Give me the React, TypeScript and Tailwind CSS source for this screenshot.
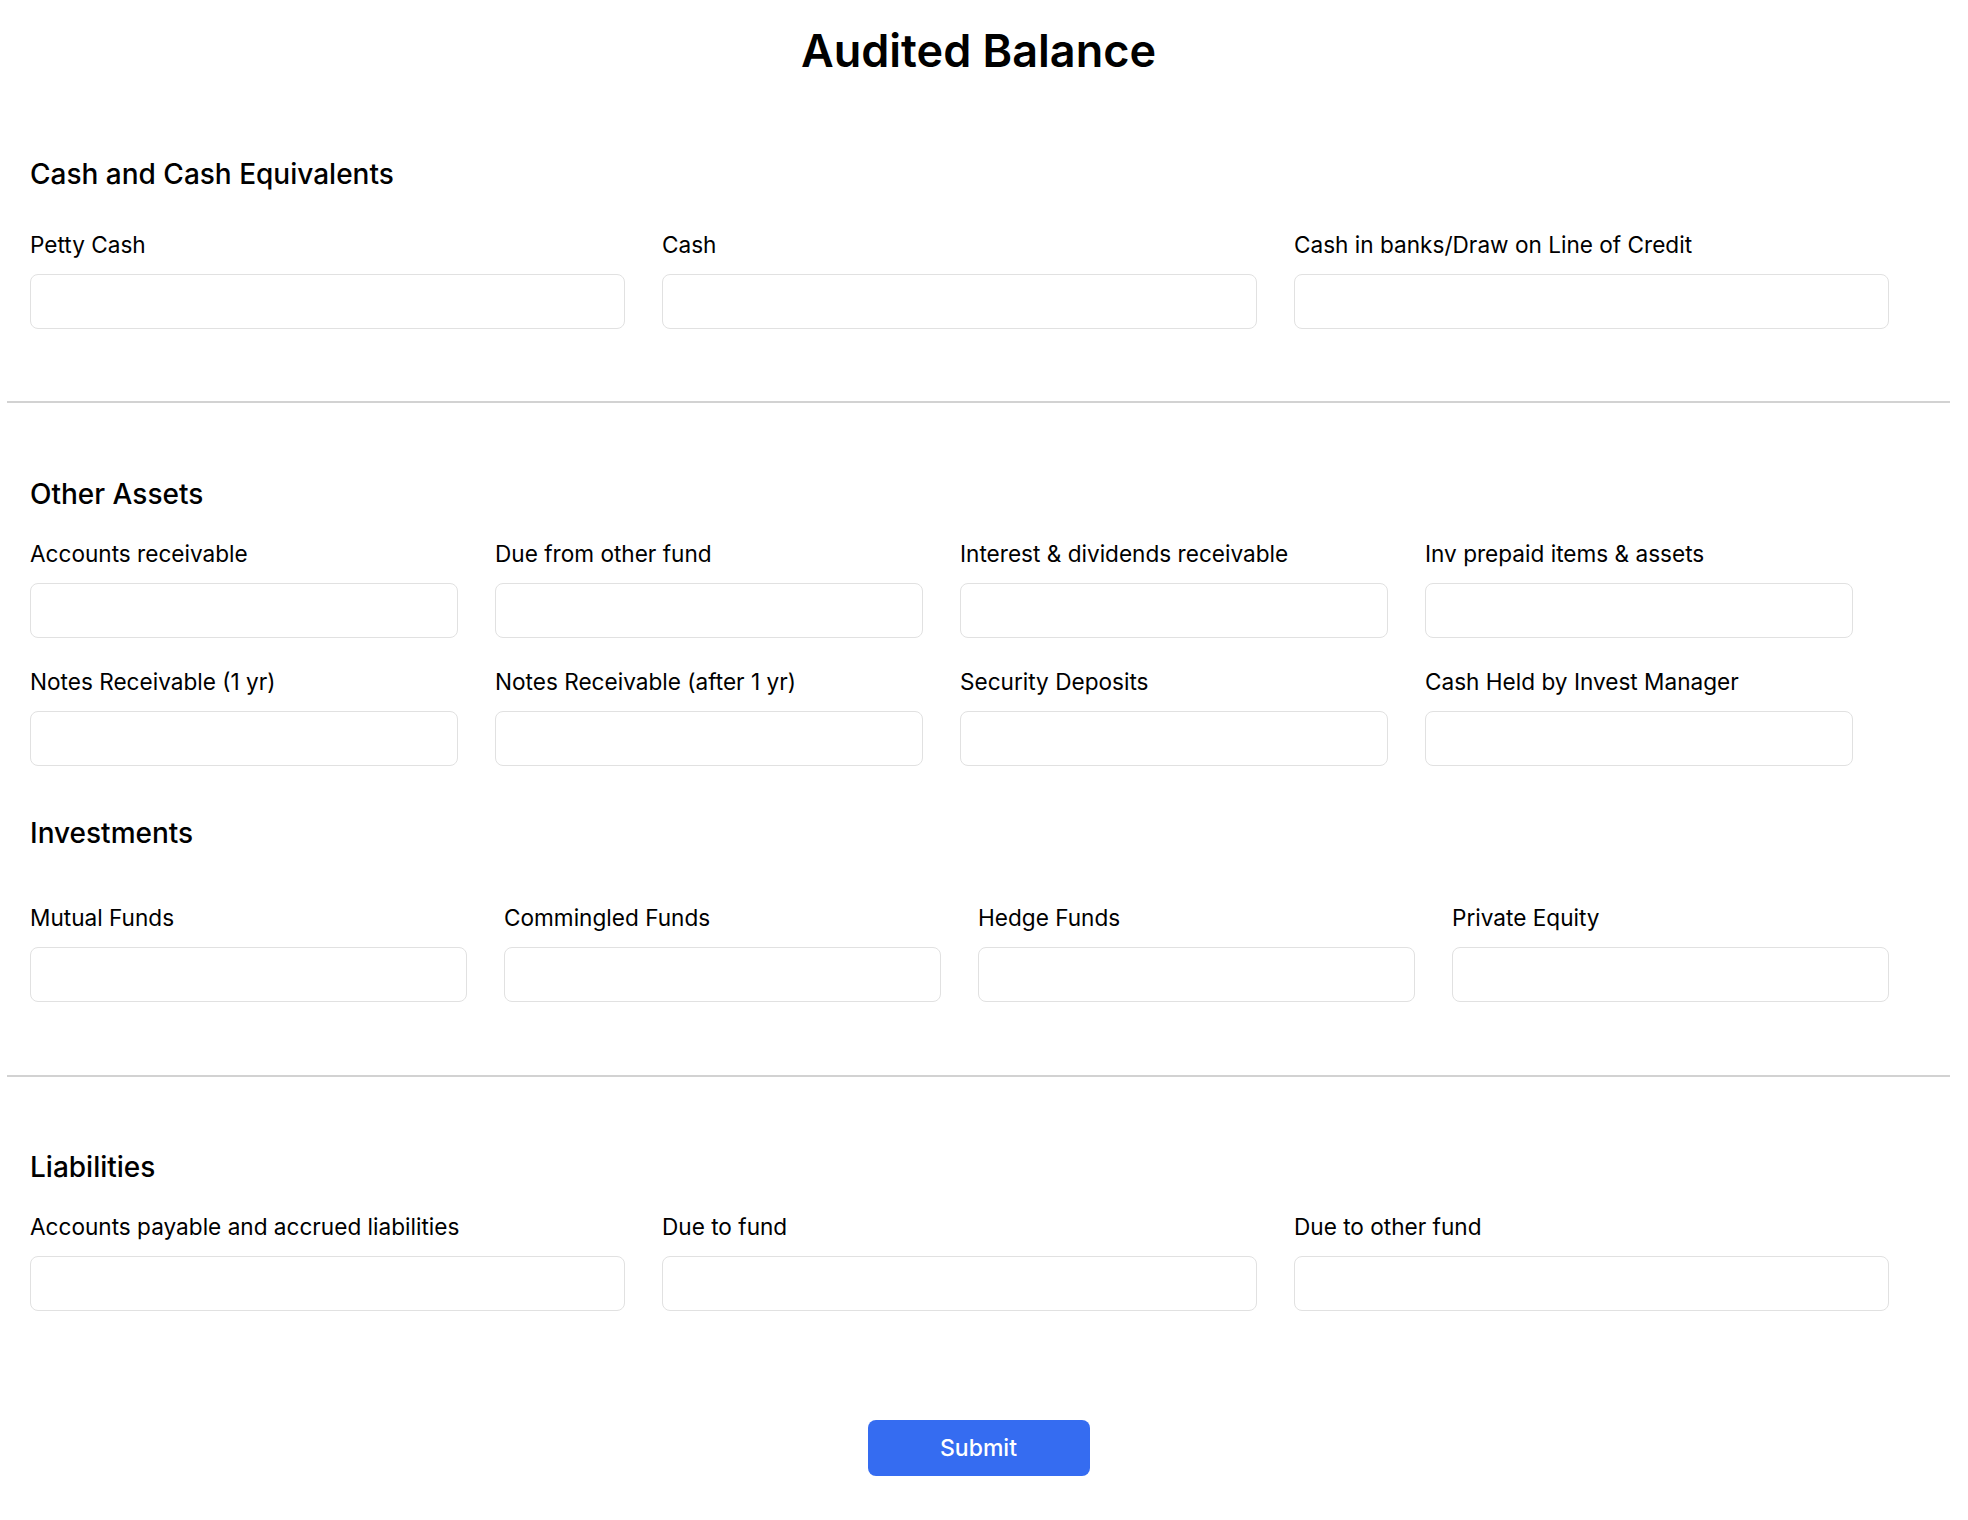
import React from 'react';

type Field = { id: string; label: string };

const cashFields: Field[] = [
    { id: 'pettyCash', label: 'Petty Cash' },
    { id: 'cash', label: 'Cash' },
    { id: 'cashInBanks', label: 'Cash in banks/Draw on Line of Credit' },
];

const otherAssetFields: Field[] = [
    { id: 'accountsReceivable', label: 'Accounts receivable' },
    { id: 'dueFromOtherFund', label: 'Due from other fund' },
    { id: 'interestDividends', label: 'Interest & dividends receivable' },
    { id: 'invPrepaid', label: 'Inv prepaid items & assets' },
    { id: 'notesReceivable1', label: 'Notes Receivable (1 yr)' },
    { id: 'notesReceivableAfter', label: 'Notes Receivable (after 1 yr)' },
    { id: 'securityDeposits', label: 'Security Deposits' },
    { id: 'cashHeldByManager', label: 'Cash Held by Invest Manager' },
];

const investmentFields: Field[] = [
    { id: 'mutualFunds', label: 'Mutual Funds' },
    { id: 'commingledFunds', label: 'Commingled Funds' },
    { id: 'hedgeFunds', label: 'Hedge Funds' },
    { id: 'privateEquity', label: 'Private Equity' },
];

const liabilityFields: Field[] = [
    { id: 'accountsPayable', label: 'Accounts payable and accrued liabilities' },
    { id: 'dueToFund', label: 'Due to fund' },
    { id: 'dueToOtherFund', label: 'Due to other fund' },
];

const FieldInput = ({ field }: { field: Field }) => (
    <div className="flex flex-col">
        <label htmlFor={field.id} className="text-[22.6px] leading-[22px] text-black mb-[18px] whitespace-nowrap">
            {field.label}
        </label>
        <input
            id={field.id}
            type="text"
            className="h-[55px] w-full rounded-lg border border-[#e1e1e1] bg-white px-3 text-[20px] outline-none"
        />
    </div>
);

const SectionTitle = ({ children }: { children: React.ReactNode }) => (
    <h2 className="text-[28px] leading-[27px] font-medium text-black">{children}</h2>
);

const Divider = () => <div className="h-[2px] w-full bg-[#d2d2d2]" />;

const App = () => {
    return (
        <div className="min-h-screen bg-white font-['Inter','Liberation_Sans',sans-serif] text-black">
            <div className="ml-[7px] w-[1943px] pb-[44px]">
                <h1 className="pt-[29px] text-center text-[45px] leading-[44px] font-semibold">Audited Balance</h1>

                {/* Cash and Cash Equivalents */}
                <section className="px-[23px] pt-[88px] pb-[72px]">
                    <SectionTitle>Cash and Cash Equivalents</SectionTitle>
                    <div className="mt-[46px] grid w-[1859px] grid-cols-3 gap-x-[37px]">
                        {cashFields.map(f => <FieldInput key={f.id} field={f} />)}
                    </div>
                </section>

                <Divider />

                {/* Other Assets + Investments */}
                <section className="px-[23px] pt-[78px]">
                    <SectionTitle>Other Assets</SectionTitle>
                    <div className="mt-[35px] grid w-[1823px] grid-cols-4 gap-x-[37px] gap-y-[33px]">
                        {otherAssetFields.map(f => <FieldInput key={f.id} field={f} />)}
                    </div>
                </section>

                <section className="px-[23px] pt-[54px] pb-[73px]">
                    <SectionTitle>Investments</SectionTitle>
                    <div className="mt-[60px] grid w-[1859px] grid-cols-4 gap-x-[37px]">
                        {investmentFields.map(f => <FieldInput key={f.id} field={f} />)}
                    </div>
                </section>

                <Divider />

                {/* Liabilities */}
                <section className="px-[23px] pt-[77px]">
                    <SectionTitle>Liabilities</SectionTitle>
                    <div className="mt-[35px] grid w-[1859px] grid-cols-3 gap-x-[37px]">
                        {liabilityFields.map(f => <FieldInput key={f.id} field={f} />)}
                    </div>
                </section>

                <div className="mt-[109px] flex justify-center">
                    <button
                        type="button"
                        className="h-[56px] w-[222px] rounded-lg bg-[#356cf1] text-[23px] font-medium text-white"
                    >
                        Submit
                    </button>
                </div>
            </div>
        </div>
    );
};

export default App;
